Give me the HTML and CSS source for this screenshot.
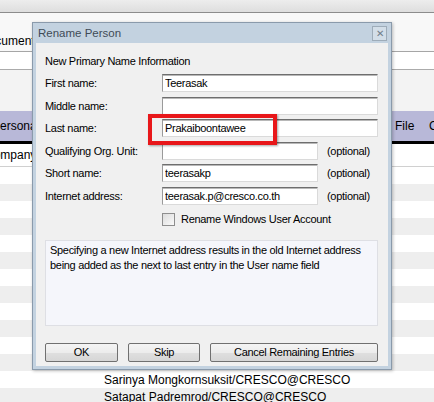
FILE: index.html
```html
<!DOCTYPE html>
<html lang="en">
<head>
    <meta charset="UTF-8">
    <meta name="viewport" content="width=device-width, initial-scale=1.0">
    <title>Rename Person</title>
    <link rel="stylesheet" href="styles.css">
</head>
<body>

    <!-- Halaman di belakang dialog -->
    <div class="page">
        <div class="topbar"></div>
        <div class="docbar"><span class="doc-tab">Document</span></div>
        <div class="strip"></div>
        <div class="panel"></div>
        <div class="colhead">
            <span class="h-personal">Personal</span>
            <span>File</span>
            <span>C</span>
        </div>
        <div class="company-row"><span class="company">Company</span></div>
        <div class="rows">
            <div class="row"></div>
            <div class="row"></div>
            <div class="row"></div>
            <div class="row"></div>
            <div class="row"></div>
            <div class="row"></div>
            <div class="row"></div>
            <div class="row"></div>
            <div class="row"></div>
            <div class="row"></div>
            <div class="row"></div>
            <div class="row"></div>
            <div class="row">Sarinya Mongkornsuksit/CRESCO@CRESCO</div>
            <div class="row">Satapat Padremrod/CRESCO@CRESCO</div>
        </div>
    </div>

    <!-- Dialog Rename Person -->
    <div class="dialog">
        <div class="titlebar">
            <span class="title">Rename Person</span>
            <span class="close">&#x2715;</span>
        </div>
        <div class="dlg-body">
            <div class="heading">New Primary Name Information</div>

            <div class="fields">
                <label for="firstName">First name:</label>
                <input class="wide" type="text" id="firstName" value="Teerasak">

                <label for="middleName">Middle name:</label>
                <input class="wide" type="text" id="middleName" value="">

                <label for="lastName">Last name:</label>
                <input class="wide" type="text" id="lastName" value="Prakaiboontawee">

                <label for="orgUnit">Qualifying Org. Unit:</label>
                <input type="text" id="orgUnit" value="">
                <span class="optional">(optional)</span>

                <label for="shortName">Short name:</label>
                <input type="text" id="shortName" value="teerasakp">
                <span class="optional">(optional)</span>

                <label for="inetAddr">Internet address:</label>
                <input type="text" id="inetAddr" value="teerasak.p@cresco.co.th">
                <span class="optional">(optional)</span>
            </div>

            <div class="check-row">
                <input type="checkbox" id="renameWin">
                <label for="renameWin">Rename Windows User Account</label>
            </div>

            <div class="info">
                Specifying a new Internet address results in the old Internet address
                being added as the next to last entry in the User name field
            </div>

            <div class="buttons">
                <button class="btn-ok">OK</button>
                <button class="btn-skip">Skip</button>
                <button class="btn-cancel">Cancel Remaining Entries</button>
            </div>
        </div>
    </div>

    <!-- Tanda merah di Last name -->
    <div class="mark"></div>

</body>
</html>
```

FILE: styles.css
```css
body {
    margin: 0;
    font-family: "Liberation Sans", Arial, sans-serif;
    font-size: 12px;
    color: #000;
    background: #fff;
    overflow: hidden;
}
.page {
    width: 434px;
    height: 402px;
}
.topbar {
    height: 12px;
    background: linear-gradient(#ededed, #dedede);
    border-bottom: 1px solid #8c8c8c;
}
.docbar {
    height: 39px;
    background: #f8f8f8;
    border-bottom: 1px solid #a6a6a6;
    display: flex;
    align-items: flex-end;
    padding-bottom: 3px;
    box-sizing: border-box;
}
.doc-tab {
    margin-left: -20px;
    line-height: 14px;
}
.strip {
    height: 17px;
    background: #fff;
    border-bottom: 1px solid #ababab;
}
.panel {
    height: 41px;
    background: #f3f3f3;
}
.colhead {
    height: 30px;
    background: #b8b8d8;
    border-bottom: 3px solid #000;
    display: grid;
    grid-template-columns: 395px 34px 1fr;
    align-items: center;
}
.h-personal {
    margin-left: -8px;
}
.company-row {
    height: 22px;
    border-bottom: 1px solid #d0d0d0;
    display: flex;
    align-items: center;
}
.company {
    margin-left: -15px;
}
.row {
    height: 17px;
    box-sizing: border-box;
    padding: 2px 0 0 104px;
    line-height: 15px;
}
.row:nth-child(even) {
    background: #eeeeee;
}

/* dialog */
.dialog {
    position: absolute;
    left: 32px;
    top: 22px;
    width: 360px;
    height: 348px;
    box-sizing: border-box;
    border: 1px solid #8a9aab;
    background: #c3d2e0;
    padding: 0 3px 3px;
    display: flex;
    flex-direction: column;
    box-shadow: 1px 1px 3px rgba(0, 0, 0, 0.25);
}
.titlebar {
    height: 20px;
    display: flex;
    align-items: center;
    justify-content: space-between;
}
.title {
    margin-left: 2px;
    font-size: 11.5px;
    color: #3f4b57;
}
.close {
    width: 13px;
    height: 13px;
    border: 1px solid #9eacb9;
    background: #d3dee8;
    color: #6f7d8a;
    font-size: 10px;
    line-height: 13px;
    text-align: center;
    margin-right: 1px;
}
.dlg-body {
    flex: 1;
    background: #f0f0f0;
    padding: 11px 10px 0 9px;
    font-size: 11px;
    letter-spacing: -0.3px;
}
.heading {
    line-height: 14px;
}
.fields {
    margin-top: 6px;
    display: grid;
    grid-template-columns: 117px 156px 60px;
    grid-auto-rows: 18px;
    row-gap: 4.6px;
    align-items: center;
}
.fields input {
    height: 18px;
    box-sizing: border-box;
    margin: 0;
    padding: 0 2px;
    font-family: inherit;
    font-size: 11px;
    letter-spacing: -0.3px;
    border: 1px solid;
    border-color: #6e6e6e #dadada #dadada #9a9a9a;
    box-shadow: inset 0 1px 0 #b8b8b8;
    background: #fff;
    outline: none;
}
.fields .wide {
    grid-column: 2 / 4;
}
.optional {
    padding-left: 9px;
}
.check-row {
    margin-top: 8px;
    padding-left: 117px;
    display: flex;
    align-items: center;
    height: 13px;
}
.check-row input {
    appearance: none;
    width: 13px;
    height: 13px;
    margin: 0 6px 0 0;
    border: 1px solid #8e8e8e;
    background: linear-gradient(135deg, #dcdcdc, #fafafa);
    box-sizing: border-box;
}
.info {
    margin-top: 14px;
    height: 86px;
    box-sizing: border-box;
    background: #f5f6fb;
    border: 1px solid #dedfe4;
    padding: 2px 4px;
    line-height: 15px;
}
.buttons {
    margin-top: 17px;
    display: flex;
    gap: 10px;
}
.buttons button {
    height: 19px;
    padding: 0;
    font-family: inherit;
    font-size: 11px;
    letter-spacing: -0.3px;
    color: #000;
    border: 1px solid #707070;
    border-radius: 2px;
    background: linear-gradient(#f4f4f4 0%, #ececec 50%, #dfdfdf 51%, #d6d6d6 100%);
}
.btn-ok {
    width: 73px;
}
.btn-skip {
    width: 72px;
}
.btn-cancel {
    width: 168px;
}

/* red highlight */
.mark {
    position: absolute;
    left: 148px;
    top: 114px;
    width: 129px;
    height: 31px;
    box-sizing: border-box;
    border: 4px solid #e8171a;
    box-shadow: 1px 1px 2px rgba(0, 0, 0, 0.35);
}
```
